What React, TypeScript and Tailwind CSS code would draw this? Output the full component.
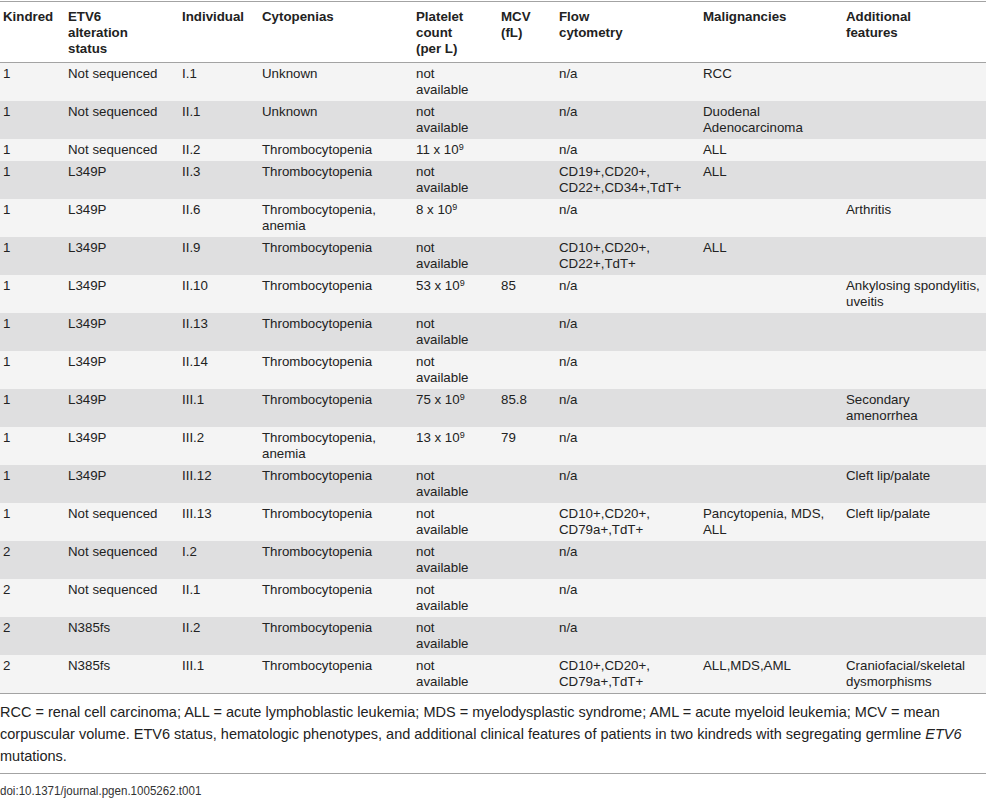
import React from "react";

type Cell = string | string[] | { sup: string };

const NA: string[] = ["not", "available"];
const s = (n: string): Cell => ({ sup: n });

const rows: Cell[][] = [
  ["1", "Not sequenced", "I.1", "Unknown", NA, "", "n/a", "RCC", ""],
  ["1", "Not sequenced", "II.1", "Unknown", NA, "", "n/a", ["Duodenal", "Adenocarcinoma"], ""],
  ["1", "Not sequenced", "II.2", "Thrombocytopenia", s("11"), "", "n/a", "ALL", ""],
  ["1", "L349P", "II.3", "Thrombocytopenia", NA, "", ["CD19+,CD20+,", "CD22+,CD34+,TdT+"], "ALL", ""],
  ["1", "L349P", "II.6", ["Thrombocytopenia,", "anemia"], s("8"), "", "n/a", "", "Arthritis"],
  ["1", "L349P", "II.9", "Thrombocytopenia", NA, "", ["CD10+,CD20+,", "CD22+,TdT+"], "ALL", ""],
  ["1", "L349P", "II.10", "Thrombocytopenia", s("53"), "85", "n/a", "", ["Ankylosing spondylitis,", "uveitis"]],
  ["1", "L349P", "II.13", "Thrombocytopenia", NA, "", "n/a", "", ""],
  ["1", "L349P", "II.14", "Thrombocytopenia", NA, "", "n/a", "", ""],
  ["1", "L349P", "III.1", "Thrombocytopenia", s("75"), "85.8", "n/a", "", ["Secondary", "amenorrhea"]],
  ["1", "L349P", "III.2", ["Thrombocytopenia,", "anemia"], s("13"), "79", "n/a", "", ""],
  ["1", "L349P", "III.12", "Thrombocytopenia", NA, "", "n/a", "", "Cleft lip/palate"],
  ["1", "Not sequenced", "III.13", "Thrombocytopenia", NA, "", ["CD10+,CD20+,", "CD79a+,TdT+"], ["Pancytopenia, MDS,", "ALL"], "Cleft lip/palate"],
  ["2", "Not sequenced", "I.2", "Thrombocytopenia", NA, "", "n/a", "", ""],
  ["2", "Not sequenced", "II.1", "Thrombocytopenia", NA, "", "n/a", "", ""],
  ["2", "N385fs", "II.2", "Thrombocytopenia", NA, "", "n/a", "", ""],
  ["2", "N385fs", "III.1", "Thrombocytopenia", NA, "", ["CD10+,CD20+,", "CD79a+,TdT+"], "ALL,MDS,AML", ["Craniofacial/skeletal", "dysmorphisms"]],
];

const headers: string[][] = [
  ["Kindred"],
  ["ETV6", "alteration", "status"],
  ["Individual"],
  ["Cytopenias"],
  ["Platelet", "count", "(per L)"],
  ["MCV", "(fL)"],
  ["Flow", "cytometry"],
  ["Malignancies"],
  ["Additional", "features"],
];

const widths = [
  "w-[65px]",
  "w-[114px]",
  "w-[80px]",
  "w-[154px]",
  "w-[85px]",
  "w-[58px]",
  "w-[144px]",
  "w-[143px]",
  "w-[143px]",
];

function renderCell(c: Cell) {
  if (typeof c === "string") return c;
  if (Array.isArray(c))
    return c.map((l, i) => (
      <React.Fragment key={i}>
        {i > 0 && <br />}
        {l}
      </React.Fragment>
    ));
  return (
    <>
      {c.sup} x 10<sup className="text-[9px]">9</sup>
    </>
  );
}

export default function App() {
  return (
    <div
      className="w-[986px] bg-white text-[#222] pt-[1px]"
      style={{ fontFamily: '"Liberation Sans", Arial, sans-serif' }}
    >
      <table className="w-full table-fixed border-collapse text-[13.3px] leading-[16px]">
        <colgroup>
          {widths.map((w, i) => (
            <col key={i} className={w} />
          ))}
        </colgroup>
        <thead>
          <tr className="border-t border-b border-[#a3a3a3]">
            {headers.map((h, i) => (
              <th
                key={i}
                className="text-left align-top font-bold pl-[3px] pr-[3px] pt-[7px] pb-[5px] whitespace-nowrap"
              >
                {h.map((l, j) => (
                  <React.Fragment key={j}>
                    {j > 0 && <br />}
                    {l}
                  </React.Fragment>
                ))}
              </th>
            ))}
          </tr>
        </thead>
        <tbody className="border-b border-[#a3a3a3]">
          {rows.map((r, i) => (
            <tr key={i} className={i % 2 === 0 ? "bg-[#f4f4f4]" : "bg-[#dfdfe0]"}>
              {r.map((c, j) => (
                <td
                  key={j}
                  className="align-top pl-[3px] pr-[2px] pt-[3px] pb-[3px] whitespace-nowrap"
                >
                  {renderCell(c)}
                </td>
              ))}
            </tr>
          ))}
        </tbody>
      </table>
      <p className="mt-[7px] text-[14.5px] leading-[22px] whitespace-nowrap">
        RCC = renal cell carcinoma; ALL = acute lymphoblastic leukemia; MDS = myelodysplastic syndrome; AML = acute myeloid leukemia; MCV = mean
        <br />
        corpuscular volume. ETV6 status, hematologic phenotypes, and additional clinical features of patients in two kindreds with segregating germline <i>ETV6</i>
        <br />
        mutations.
      </p>
      <div className="mt-[6px] border-t border-[#a3a3a3] pt-[9px] text-[13px] leading-[16px]">
        <div className="w-fit origin-left scale-x-[0.89] text-[#333]">
          doi:10.1371/journal.pgen.1005262.t001
        </div>
      </div>
    </div>
  );
}
